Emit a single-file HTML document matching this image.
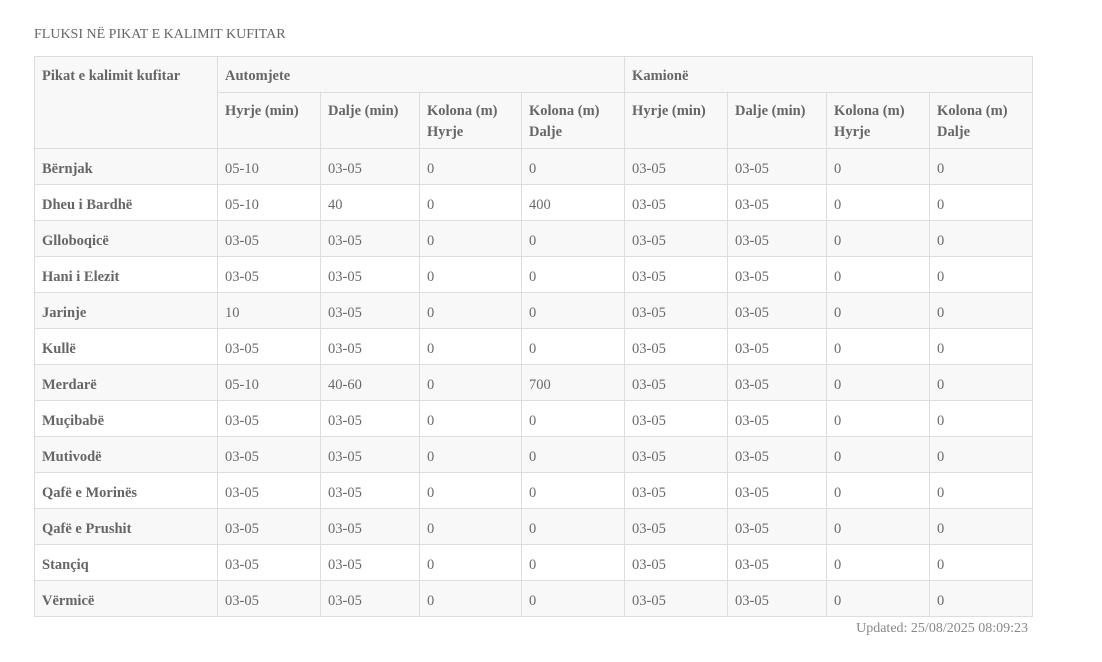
<!DOCTYPE html><html><head><style>
body{margin:0;background:#fff;font-family:"Liberation Serif",serif;}
h4{position:absolute;left:34px;top:27px;margin:0;font-weight:normal;font-size:14px;color:#666;}
table{position:absolute;left:34px;top:56px;border-collapse:collapse;table-layout:fixed;width:998px;font-size:14.5px;}
td,th{border:1px solid #ddd;padding:0 7px;text-align:left;vertical-align:middle;height:35px;color:#6a6a6a;box-sizing:border-box;}
td{padding-top:5px;height:36px;}
th{font-weight:bold;color:#666;vertical-align:top;padding-top:9px;line-height:21px;background:#f8f8f8;}
tr.h1 th{height:36px;}
tr.h2 th{height:56px;padding-top:8px;}
td:first-child{font-weight:bold;color:#666;}
tbody tr:nth-child(odd) td{background:#f8f8f8;}
.u{position:absolute;right:74px;top:621px;font-size:14px;color:#888;}
</style></head><body>
<h4>FLUKSI NË PIKAT E KALIMIT KUFITAR</h4>
<table>
<colgroup><col style="width:183px"><col style="width:103px"><col style="width:99px"><col style="width:102px"><col style="width:103px"><col style="width:103px"><col style="width:99px"><col style="width:103px"><col style="width:103px"></colgroup>
<thead>
<tr class="h1"><th rowspan="2">Pikat e kalimit kufitar</th><th colspan="4">Automjete</th><th colspan="4">Kamionë</th></tr>
<tr class="h2"><th>Hyrje (min)</th><th>Dalje (min)</th><th>Kolona (m) Hyrje</th><th>Kolona (m) Dalje</th><th>Hyrje (min)</th><th>Dalje (min)</th><th>Kolona (m) Hyrje</th><th>Kolona (m) Dalje</th></tr>
</thead><tbody>
<tr><td>Bërnjak</td><td>05-10</td><td>03-05</td><td>0</td><td>0</td><td>03-05</td><td>03-05</td><td>0</td><td>0</td></tr>
<tr><td>Dheu i Bardhë</td><td>05-10</td><td>40</td><td>0</td><td>400</td><td>03-05</td><td>03-05</td><td>0</td><td>0</td></tr>
<tr><td>Glloboqicë</td><td>03-05</td><td>03-05</td><td>0</td><td>0</td><td>03-05</td><td>03-05</td><td>0</td><td>0</td></tr>
<tr><td>Hani i Elezit</td><td>03-05</td><td>03-05</td><td>0</td><td>0</td><td>03-05</td><td>03-05</td><td>0</td><td>0</td></tr>
<tr><td>Jarinje</td><td>10</td><td>03-05</td><td>0</td><td>0</td><td>03-05</td><td>03-05</td><td>0</td><td>0</td></tr>
<tr><td>Kullë</td><td>03-05</td><td>03-05</td><td>0</td><td>0</td><td>03-05</td><td>03-05</td><td>0</td><td>0</td></tr>
<tr><td>Merdarë</td><td>05-10</td><td>40-60</td><td>0</td><td>700</td><td>03-05</td><td>03-05</td><td>0</td><td>0</td></tr>
<tr><td>Muçibabë</td><td>03-05</td><td>03-05</td><td>0</td><td>0</td><td>03-05</td><td>03-05</td><td>0</td><td>0</td></tr>
<tr><td>Mutivodë</td><td>03-05</td><td>03-05</td><td>0</td><td>0</td><td>03-05</td><td>03-05</td><td>0</td><td>0</td></tr>
<tr><td>Qafë e Morinës</td><td>03-05</td><td>03-05</td><td>0</td><td>0</td><td>03-05</td><td>03-05</td><td>0</td><td>0</td></tr>
<tr><td>Qafë e Prushit</td><td>03-05</td><td>03-05</td><td>0</td><td>0</td><td>03-05</td><td>03-05</td><td>0</td><td>0</td></tr>
<tr><td>Stançiq</td><td>03-05</td><td>03-05</td><td>0</td><td>0</td><td>03-05</td><td>03-05</td><td>0</td><td>0</td></tr>
<tr><td>Vërmicë</td><td>03-05</td><td>03-05</td><td>0</td><td>0</td><td>03-05</td><td>03-05</td><td>0</td><td>0</td></tr>
</tbody></table>
<div class="u">Updated: 25/08/2025 08:09:23</div>
</body></html>
